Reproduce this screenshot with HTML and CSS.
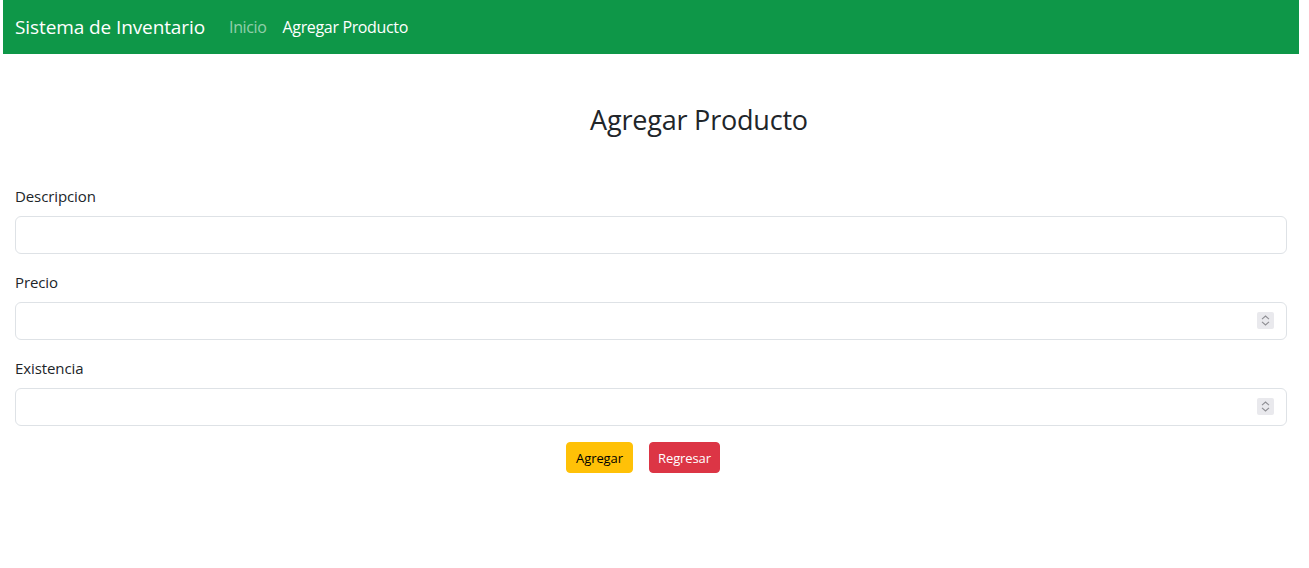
FILE: index.html
```html
<!DOCTYPE html>
<html lang="es">
<head>
<meta charset="utf-8">
<title>Agregar Producto</title>
<link rel="stylesheet" href="styles.css">
</head>
<body>
<nav class="navbar">
  <a class="brand" href="#">Sistema de Inventario</a>
  <ul class="nav">
    <li><a class="nav-link muted" href="#">Inicio</a></li>
    <li><a class="nav-link active" href="#">Agregar Producto</a></li>
  </ul>
</nav>
<main class="main">
  <div class="title-row"><h3 class="title">Agregar Producto</h3></div>
  <form class="form">
    <div class="group">
      <label class="label" for="d">Descripcion</label>
      <div class="field"><input class="input" id="d" type="text"></div>
    </div>
    <div class="group">
      <label class="label" for="p">Precio</label>
      <div class="field"><input class="input" id="p" type="text"><span class="spin"><svg width="17" height="17" viewBox="0 0 17 17"><path d="M5 7.2 L8.5 4 L12 7.2 M5 9.8 L8.5 13 L12 9.8" fill="none" stroke="#8e8e93" stroke-width="1.1"/></svg></span></div>
    </div>
    <div class="group">
      <label class="label" for="e">Existencia</label>
      <div class="field"><input class="input" id="e" type="text"><span class="spin"><svg width="17" height="17" viewBox="0 0 17 17"><path d="M5 7.2 L8.5 4 L12 7.2 M5 9.8 L8.5 13 L12 9.8" fill="none" stroke="#8e8e93" stroke-width="1.1"/></svg></span></div>
    </div>
    <div class="actions">
      <button type="button" class="btn btn-warning">Agregar</button>
      <button type="button" class="btn btn-danger">Regresar</button>
    </div>
  </form>
</main>
</body>
</html>
```
FILE: styles.css
```css
* { box-sizing: border-box; }
body {
  margin: 0;
  font-family: "Open Sans", "Noto Sans", sans-serif;
  color: #212529;
  background: #fff;
}
.navbar {
  display: flex;
  align-items: center;
  height: 54px;
  margin: 0 10px 0 3px;
  padding: 0 12px;
  background: #0e9748;
}
.brand {
  font-size: 19px;
  color: #fff;
  text-decoration: none;
  margin-right: 16px;
  letter-spacing: -0.1px;
}
.nav {
  display: flex;
  list-style: none;
  margin: 0;
  padding: 0;
}
.nav-link {
  display: block;
  padding: 0 8px;
  font-size: 16px;
  text-decoration: none;
  letter-spacing: -0.35px;
}
.nav-link.muted { color: rgba(255,255,255,0.55); }
.nav-link.active { color: #fff; }
.main {
  padding: 0 22px 0 15px;
}
.title-row {
  padding-left: 96px;
  padding-top: 49px;
}
.title {
  margin: 0;
  text-align: center;
  font-size: 27px;
  font-weight: 400;
  line-height: 34px;
  letter-spacing: -0.2px;
}
.form {
  margin-top: 47px;
}
.group {
  margin-bottom: 16px;
}
.label {
  display: block;
  font-size: 15px;
  line-height: 24px;
  margin-bottom: 8px;
  letter-spacing: -0.1px;
}
.field {
  position: relative;
}
.input {
  display: block;
  width: 100%;
  height: 38px;
  border: 1px solid #dee2e6;
  border-radius: 6px;
  font: inherit;
  padding: 6px 12px;
  background: #fff;
}
.spin {
  position: absolute;
  right: 13px;
  top: 10px;
  width: 17px;
  height: 17px;
  background: #e9e9ed;
  border-radius: 2px;
}
.spin svg { display: block; }
.actions {
  display: flex;
  justify-content: center;
  gap: 16px;
  padding-right: 16px;
}
.btn {
  height: 31px;
  padding: 0 8px;
  font-family: inherit;
  font-size: 13px;
  border-radius: 4px;
  border: 1px solid transparent;
  letter-spacing: -0.1px;
}
.btn-warning { background: #ffc107; border-color: #ffc107; color: #000; width: 67px; }
.btn-danger { background: #dc3545; border-color: #dc3545; color: #fff; width: 71px; }
```
